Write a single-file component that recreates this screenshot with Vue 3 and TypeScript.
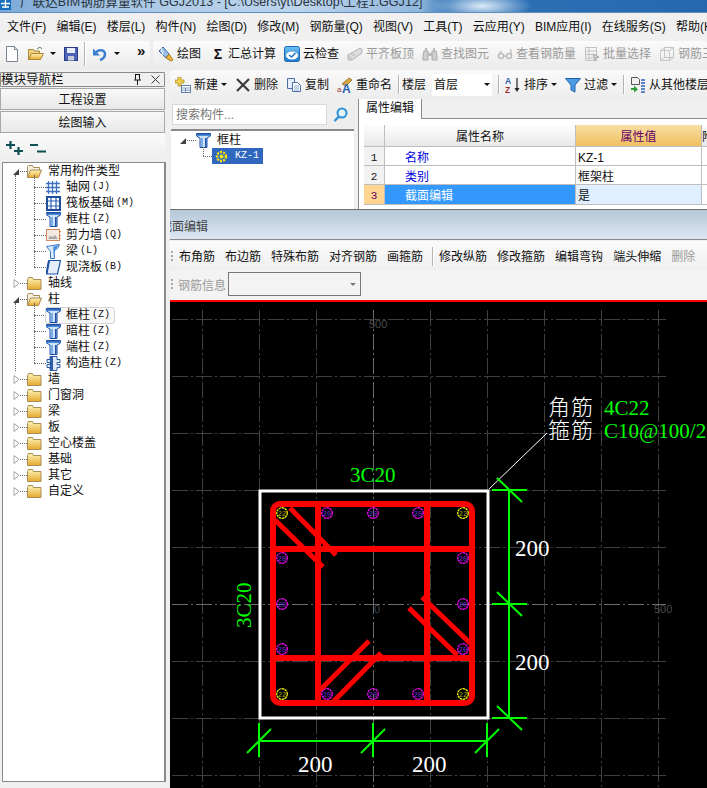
<script setup lang="ts">
interface ToolItem {
  icon?: string;
  glyph?: string;
  text: string;
  dim?: boolean;
  caret?: boolean;
  sep?: boolean;
}
interface TreeLeaf {
  icon: string;
  label: string;
  key: string;
  hover?: boolean;
}
interface TreeRoot {
  label: string;
  kids?: TreeLeaf[];
}

const menus = ['文件(F)', '编辑(E)', '楼层(L)', '构件(N)', '绘图(D)', '修改(M)', '钢筋量(Q)', '视图(V)', '工具(T)', '云应用(Y)', 'BIM应用(I)', '在线服务(S)', '帮助(H)'];

const mainTools: ToolItem[] = [
  { icon: 'i-brush', text: '绘图' },
  { glyph: 'Σ', text: '汇总计算' },
  { icon: 'i-cloud', text: '云检查' },
  { icon: 'i-level', text: '平齐板顶', dim: true },
  { icon: 'i-binoc', text: '查找图元', dim: true },
  { icon: 'i-glasses', text: '查看钢筋量', dim: true },
  { icon: 'i-batch', text: '批量选择', dim: true },
  { icon: 'i-cage', text: '钢筋三维', dim: true },
];

const partTools: ToolItem[] = [
  { icon: 'i-new', text: '新建', caret: true },
  { icon: 'i-x', text: '删除' },
  { icon: 'i-copy', text: '复制' },
  { icon: 'i-rename', text: '重命名' },
];

const tree: TreeRoot[] = [
  {
    label: '常用构件类型',
    kids: [
      { icon: 'i-grid', label: '轴网', key: '(J)' },
      { icon: 'i-raft', label: '筏板基础', key: '(M)' },
      { icon: 'i-col', label: '框柱', key: '(Z)' },
      { icon: 'i-wall', label: '剪力墙', key: '(Q)' },
      { icon: 'i-beam', label: '梁', key: '(L)' },
      { icon: 'i-slab', label: '现浇板', key: '(B)' },
    ],
  },
  { label: '轴线' },
  {
    label: '柱',
    kids: [
      { icon: 'i-col', label: '框柱', key: '(Z)', hover: true },
      { icon: 'i-col', label: '暗柱', key: '(Z)' },
      { icon: 'i-col', label: '端柱', key: '(Z)' },
      { icon: 'i-struct', label: '构造柱', key: '(Z)' },
    ],
  },
  { label: '墙' },
  { label: '门窗洞' },
  { label: '梁' },
  { label: '板' },
  { label: '空心楼盖' },
  { label: '基础' },
  { label: '其它' },
  { label: '自定义' },
];

const props = [
  { no: 1, name: '名称', value: 'KZ-1' },
  { no: 2, name: '类别', value: '框架柱' },
  { no: 3, name: '截面编辑', value: '是', active: true },
];

const rebarTools = ['布角筋', '布边筋', '特殊布筋', '对齐钢筋', '画箍筋'];
const rebarTools2 = ['修改纵筋', '修改箍筋', '编辑弯钩', '端头伸缩'];

// canvas data, in page coordinates (the svg viewBox starts at 170,302)
const gridX = [202.5, 259.5, 316.5, 373.5, 430.5, 487.5, 544.5, 601.5, 658.5];
const gridY = [319.5, 376.5, 433.5, 490.5, 547.5, 604.5, 661.5, 718.5, 775.5];
const barX = [282, 327, 373, 418, 463];
const barY = [513, 558, 604, 649, 694];

const bars = barY.flatMap((y, r) =>
  barX.flatMap((x, c) => {
    const edgeRow = r === 0 || r === 4;
    const edgeCol = c === 0 || c === 4;
    if (!edgeRow && !edgeCol) return [];
    return [{ x, y, corner: edgeRow && edgeCol }];
  }),
);

const diagonals = [
  [290, 508, 336, 555],
  [275, 520, 323, 567],
  [320, 690, 369, 641],
  [333, 702, 381, 653],
  [422, 597, 470, 643],
  [409, 608, 457, 655],
];

const dimSlashes = [
  [497, 478, 522, 502],
  [497, 592, 522, 616],
  [497, 706, 522, 730],
  [247, 753, 271, 729],
  [361, 753, 385, 729],
  [475, 753, 499, 729],
];
</script>

<template>
  <div class="app">
    <svg class="defs" width="0" height="0">
      <defs>
        <linearGradient id="g-folder" x1="0" y1="0" x2="0" y2="1">
          <stop offset="0" stop-color="#fff3b8" />
          <stop offset="1" stop-color="#e6a92c" />
        </linearGradient>
        <linearGradient id="g-cloud" x1="0" y1="0" x2="0" y2="1">
          <stop offset="0" stop-color="#6cc0f2" />
          <stop offset="1" stop-color="#1e78c8" />
        </linearGradient>
        <linearGradient id="g-col" x1="0" y1="0" x2="0" y2="1">
          <stop offset="0" stop-color="#1b4fa8" />
          <stop offset="1" stop-color="#5d9be0" />
        </linearGradient>
      </defs>
      <symbol id="i-open-tri" viewBox="0 0 7 9"><path d="M6 2v6H0z" fill="#444" /></symbol>
      <symbol id="i-closed-tri" viewBox="0 0 7 9"><path d="M1 .5l5 4-5 4z" fill="#fff" stroke="#a6a6a6" /></symbol>
      <symbol id="i-folder" viewBox="0 0 15 13">
        <path d="M.5 2.500l1-2h4l1 2h7.500v10H.5z" fill="url(#g-folder)" stroke="#a98b55" />
      </symbol>
      <symbol id="i-folder-open" viewBox="0 0 15 13">
        <path d="M.5 12.500v-11l1-1h4l1 2h6v3" fill="#f4f0e2" stroke="#a98b55" />
        <path d="M.5 12.500l3-7.500h11l-3 7.500z" fill="url(#g-folder)" stroke="#a98b55" />
      </symbol>
      <symbol id="i-grid" viewBox="0 0 15 15">
        <path d="M2.500 1v13M6.500 1v13M10.500 1v13M0 3.500h14M0 7.500h14M0 11.500h14" stroke="#3f6fc0" stroke-width="1.300" fill="none" />
      </symbol>
      <symbol id="i-raft" viewBox="0 0 15 15">
        <rect x="1" y="1" width="13" height="13" fill="#fff" stroke="#1e4e9c" stroke-width="2" />
        <path d="M5 2v11M10 2v11M2 5h11M2 10h11" stroke="#2a62b8" stroke-width="1.200" />
      </symbol>
      <symbol id="i-col" viewBox="0 0 15 15">
        <path d="M.5 .5h14v2.500l-3.500 2v9.500h-7v-9.500l-3.500-2z" fill="#cfe2f7" stroke="#1d4fa5" />
        <path d="M.5 .5h14v2.500h-14z" fill="url(#g-col)" />
        <path d="M5 5h2v9H5z" fill="#7ab0ea" />
        <path d="M9 5h1.500v9H9z" fill="#1d4fa5" />
      </symbol>
      <symbol id="i-wall" viewBox="0 0 15 15">
        <rect x=".5" y="1.500" width="13" height="11" fill="#f3e9e0" stroke="#d08a60" />
        <path d="M2 11l2-3 3 1 2-2 3 4z" fill="#a8a8a8" />
        <path d="M14 3v1M14 7v1M14 10v1" stroke="#e07020" stroke-width="1.500" />
      </symbol>
      <symbol id="i-beam" viewBox="0 0 15 15">
        <path d="M.5 2.500l13-2-2 4-3 2v8h-4v-7z" fill="#dceafa" stroke="#3a78c8" />
        <path d="M7 3l6-2.500-4 6v8H8z" fill="#4c8fdc" />
      </symbol>
      <symbol id="i-slab" viewBox="0 0 15 15">
        <path d="M3 .5h11.500l-3 13.500h-11z" fill="#e4eefb" stroke="#1d4fa5" stroke-width="1.200" />
        <path d="M.5 14L3 .5" stroke="#1d4fa5" stroke-width="2" />
      </symbol>
      <symbol id="i-struct" viewBox="0 0 15 15">
        <path d="M4 .5h7v3h3v3h-3v2h3v3h-3v3H4v-3H1v-3h3v-2H1v-3h3z" fill="#dfe9f7" stroke="#2c5ca8" />
        <path d="M4 1h3v13H4z" fill="#2c5ca8" />
      </symbol>
      <symbol id="i-doc" viewBox="0 0 16 16">
        <path d="M2.500 .5h8l3 3v12h-11z" fill="#fff" stroke="#77838f" />
        <path d="M10.500 .5v3h3" fill="#dfe6ee" stroke="#77838f" />
      </symbol>
      <symbol id="i-open" viewBox="0 0 16 16">
        <path d="M.5 13.500v-10h5l1 1.500h5v3" fill="#eed27e" stroke="#a9863a" />
        <path d="M.5 13.500l3-6h12l-3 6z" fill="url(#g-folder)" stroke="#a9863a" />
        <path d="M9 3c2-2 4-2 5 0" fill="none" stroke="#3a7a3a" />
      </symbol>
      <symbol id="i-save" viewBox="0 0 16 16">
        <rect x="1.500" y="1.500" width="13" height="13" fill="#4a62b8" stroke="#2a3c88" />
        <rect x="4" y="2" width="8" height="5" fill="#e8eef8" />
        <rect x="5" y="10" width="6" height="4.500" fill="#c8ccd6" />
      </symbol>
      <symbol id="i-undo" viewBox="0 0 16 16">
        <path d="M3 8c2-5 10-5 10 0 0 3-2 5-5 6" fill="none" stroke="#3a7fd0" stroke-width="2.600" />
        <path d="M1 2.500v7h7z" fill="#3a7fd0" />
      </symbol>
      <symbol id="i-brush" viewBox="0 0 16 16">
        <path d="M1 5l4-4 6 7-3 4z" fill="#9cc0ea" stroke="#38649e" />
        <path d="M8 12l3-4 4 6-2 1z" fill="#f0b43c" stroke="#a87820" />
        <path d="M3 2l2 7" stroke="#fff" />
      </symbol>
      <symbol id="i-cloud" viewBox="0 0 16 16">
        <rect x=".5" y=".5" width="15" height="15" rx="2" fill="url(#g-cloud)" stroke="#1a6ab4" />
        <ellipse cx="8" cy="9.500" rx="6" ry="4" fill="#fff" />
        <path d="M5 9l2.500 2 4-4" fill="none" stroke="#1e78c8" stroke-width="1.500" />
      </symbol>
      <symbol id="i-level" viewBox="0 0 16 16">
        <path d="M1 14V9l12-7 2 1v4L5 14z" fill="#dcdcdc" stroke="#b4b4b4" />
        <path d="M1 9l4 5M4 7l4 3" stroke="#b4b4b4" fill="none" />
      </symbol>
      <symbol id="i-binoc" viewBox="0 0 16 16">
        <path d="M2 5h4v9H1v-4zM10 5h4l1 5v4h-5z" fill="#cfcfcf" stroke="#aaa" />
        <path d="M3 2h2v3H3zM11 2h2v3h-2zM6 7h4v3H6z" fill="#bbb" />
      </symbol>
      <symbol id="i-glasses" viewBox="0 0 16 16">
        <circle cx="4" cy="10" r="2.500" fill="none" stroke="#bdbdbd" stroke-width="1.500" />
        <circle cx="12" cy="10" r="2.500" fill="none" stroke="#bdbdbd" stroke-width="1.500" />
        <path d="M6.500 10h3M1.500 9l3-4M14.500 9l-1-6" fill="none" stroke="#bdbdbd" stroke-width="1.300" />
      </symbol>
      <symbol id="i-batch" viewBox="0 0 16 16">
        <path d="M1.500 1.500h11v13h-11zM1.500 5h11M1.500 8.500h11M1.500 12h11M5 1.500v13" fill="none" stroke="#c4c4c4" />
        <path d="M9 8l6 3-3 1-1 3z" fill="#d4d4d4" stroke="#aaa" />
      </symbol>
      <symbol id="i-cage" viewBox="0 0 16 16">
        <path d="M1.500 4.500l4-3h9v10l-4 3h-9zM1.500 4.500h9v10M10.500 4.500l4-3M5.500 1.500v10h9M5.500 11.500l-4 3" fill="none" stroke="#c4c4c4" />
      </symbol>
      <symbol id="i-new" viewBox="0 0 16 16">
        <path d="M3 0h3v3h3v3H6v3H3V6H0V3h3z" fill="#f2d04e" stroke="#a88a20" stroke-width=".7" />
        <rect x="6.500" y="8.500" width="9" height="7" fill="#fff" stroke="#5f7fae" />
        <path d="M6.500 11h9M6.500 13.200h9M10.500 11v4.500" stroke="#5f7fae" stroke-width=".8" />
      </symbol>
      <symbol id="i-x" viewBox="0 0 16 16">
        <path d="M2 2l12 12M14 2L2 14" stroke="#3c3c3c" stroke-width="2.200" />
      </symbol>
      <symbol id="i-copy" viewBox="0 0 16 16">
        <path d="M1.500 1.500h7v10h-7z" fill="#e4eefb" stroke="#4a6ea8" />
        <path d="M6.500 5.500h5l3 3v6h-8z" fill="#fff" stroke="#4a6ea8" />
        <path d="M8 9h5M8 11h5M8 13h5" stroke="#6c8fc4" stroke-width=".8" />
      </symbol>
      <symbol id="i-rename" viewBox="0 0 16 16">
        <path d="M5 7l7-6 3 2-6 6z" fill="#d8a83c" stroke="#7a5a18" stroke-width=".7" />
        <text x="0" y="15" font-size="8" fill="#a03838" font-family="Liberation Sans">a</text>
        <text x="5" y="15.500" font-size="12" font-weight="700" fill="#2a62b8" font-family="Liberation Sans">A</text>
      </symbol>
      <symbol id="i-sort" viewBox="0 0 16 16">
        <text x="0" y="7" font-size="8.500" font-weight="700" fill="#3060b0" font-family="Liberation Sans">A</text>
        <text x="0" y="15.500" font-size="8.500" font-weight="700" fill="#a03030" font-family="Liberation Sans">Z</text>
        <path d="M12 1v12" stroke="#222" stroke-width="1.200" />
        <path d="M9.500 11h5L12 15z" fill="#222" />
      </symbol>
      <symbol id="i-filter" viewBox="0 0 16 16">
        <path d="M.5 1.500h15L10 8v7l-4-2V8z" fill="#4c9ae4" stroke="#1e62ac" />
      </symbol>
      <symbol id="i-floor" viewBox="0 0 16 16">
        <path d="M1.500 .5h6l2 2v5h-8z" fill="#f2f2f2" stroke="#555" />
        <path d="M1 11h3V8.500l4 4-4 3V13H1z" fill="#2f9a3a" />
        <path d="M11 3h4M11 6h4M11 9h4M11 12h4M11 15h4" stroke="#2a62b8" stroke-width="1.600" />
      </symbol>
      <symbol id="i-gear" viewBox="0 0 13 13">
        <circle cx="6.500" cy="6.500" r="4.500" fill="none" stroke="#ffe600" stroke-width="2.400" stroke-dasharray="2 1.200" />
        <circle cx="6.500" cy="6.500" r="2" fill="#ffe600" />
      </symbol>
    </svg>

    <header class="titlebar">
      <svg class="app-icon" width="11" height="10" viewBox="0 0 11 10">
        <rect width="11" height="10" fill="#1670c0" />
        <path d="M1 3.500h9M5.500 0v8M2 7h7" stroke="#fff" stroke-width="1.300" fill="none" />
      </svg>
      <span class="title-text">广联达BIM钢筋算量软件 GGJ2013 - [C:\Users\yt\Desktop\工程1.GGJ12]</span>
    </header>

    <nav class="menubar">
      <span v-for="m in menus" :key="m">{{ m }}</span>
    </nav>

    <div class="mainbar">
      <div class="band band-file">
        <svg class="ic"><use href="#i-doc" /></svg>
        <svg class="ic ic-open"><use href="#i-open" /></svg>
        <i class="caret"></i>
        <svg class="ic"><use href="#i-save" /></svg>
        <b class="sep"></b>
        <svg class="ic"><use href="#i-undo" /></svg>
        <i class="caret"></i>
        <span class="more">»</span>
      </div>
      <div class="band band-tools">
        <span v-for="t in mainTools" :key="t.text" class="tool" :class="{ dim: t.dim }">
          <b v-if="t.glyph" class="glyph">{{ t.glyph }}</b>
          <svg v-else class="ic"><use :href="'#' + t.icon" /></svg>
          {{ t.text }}
        </span>
      </div>
    </div>

    <div class="body">
      <aside class="nav">
        <div class="nav-head">
          <span>模块导航栏</span>
          <span class="nav-ctl">
            <svg width="9" height="11" viewBox="0 0 9 11"><path d="M2.500 .5v5M6.500 .5v5M1 6h7M4.500 6v5M2 .5h5" stroke="#111" fill="none" /></svg>
            <svg width="9" height="9" viewBox="0 0 9 9"><path d="M.5 .5l8 8M8.500 .5l-8 8" stroke="#333" fill="none" /></svg>
          </span>
        </div>
        <div class="nav-btn">工程设置</div>
        <div class="nav-btn">绘图输入</div>
        <div class="nav-tools">
          <svg width="17" height="14" viewBox="0 0 17 14"><path d="M0 4h9M4.500 0v8M8 10h9M12.500 6v8" stroke="#0d4f52" stroke-width="2.200" fill="none" /></svg>
          <svg width="16" height="10" viewBox="0 0 16 10"><path d="M0 2h8M7 8.500h9" stroke="#0d4f52" stroke-width="2.200" fill="none" /></svg>
        </div>
        <div class="tree">
          <div v-for="root in tree" :key="root.label">
            <div class="row root">
              <svg class="tri"><use :href="root.kids ? '#i-open-tri' : '#i-closed-tri'" /></svg>
              <i class="dots"></i>
              <svg class="fold"><use :href="root.kids ? '#i-folder-open' : '#i-folder'" /></svg>
              <span class="lbl">{{ root.label }}</span>
            </div>
            <div v-if="root.kids" class="kids">
              <div v-for="leaf in root.kids" :key="leaf.label" class="row leaf">
                <i class="dots long"></i>
                <span class="leaf-body" :class="{ hover: leaf.hover }">
                  <svg class="leaf-ic"><use :href="'#' + leaf.icon" /></svg>
                  <span class="lbl">{{ leaf.label }}</span>
                  <span class="hot">{{ leaf.key }}</span>
                </span>
              </div>
            </div>
          </div>
        </div>
      </aside>

      <main class="work">
        <div class="partbar">
          <span v-for="t in partTools" :key="t.text" class="tool">
            <svg class="ic"><use :href="'#' + t.icon" /></svg>
            {{ t.text }}<i v-if="t.caret" class="caret"></i>
          </span>
          <b class="sep"></b>
          <span class="floor-lbl">楼层</span>
          <span class="floor-box">首层<i class="caret"></i></span>
          <b class="sep"></b>
          <span class="tool"><svg class="ic"><use href="#i-sort" /></svg>排序<i class="caret"></i></span>
          <span class="tool"><svg class="ic"><use href="#i-filter" /></svg>过滤<i class="caret"></i></span>
          <b class="sep"></b>
          <span class="tool"><svg class="ic"><use href="#i-floor" /></svg>从其他楼层复制</span>
        </div>

        <div class="split">
          <section class="parts">
            <div class="search">
              <span class="search-box">搜索构件...</span>
              <svg width="15" height="15" viewBox="0 0 15 15"><circle cx="9" cy="6" r="4.500" fill="#e4f2fc" stroke="#2f8fd8" stroke-width="2" /><path d="M6 9.500L1.500 14" stroke="#2f8fd8" stroke-width="2.400" /></svg>
            </div>
            <div class="part-tree">
              <div class="part-root">
                <svg class="tri"><use href="#i-open-tri" /></svg>
                <i class="dots"></i>
                <svg class="leaf-ic"><use href="#i-col" /></svg>
                <span class="lbl">框柱</span>
              </div>
              <div class="part-leaf">
                <i class="dots long"></i>
                <span class="picked">
                  <svg width="13" height="13"><use href="#i-gear" /></svg>
                  <span class="hot">KZ-1</span>
                </span>
              </div>
            </div>
          </section>

          <section class="prop">
            <div class="tabs"><span class="tab">属性编辑</span></div>
            <div class="table">
              <div class="tr th">
                <span class="c-no"></span>
                <span class="c-name">属性名称</span>
                <span class="c-val">属性值</span>
                <span class="c-end">附</span>
              </div>
              <div v-for="p in props" :key="p.no" class="tr" :class="{ active: p.active }">
                <span class="c-no">{{ p.no }}</span>
                <span class="c-name">{{ p.name }}</span>
                <span class="c-val">{{ p.value }}</span>
                <span class="c-end"></span>
              </div>
            </div>
          </section>
        </div>

        <div class="dlg-title"><span>截面编辑</span></div>
        <div class="rebar-bar">
          <i class="grip"></i>
          <span v-for="t in rebarTools" :key="t">{{ t }}</span>
          <b class="sep"></b>
          <span v-for="t in rebarTools2" :key="t">{{ t }}</span>
          <span class="dim">删除</span>
        </div>
        <div class="rebar-info">
          <i class="grip"></i>
          <span class="dim">钢筋信息</span>
          <span class="info-box"><i class="caret gray"></i></span>
        </div>

        <svg class="canvas" viewBox="170 302 537 486" width="537" height="486">
          <g class="grid">
            <line v-for="x in gridX" :key="'v' + x" :x1="x" y1="310" :x2="x" y2="788" :class="{ axis: x === 373.5 }" />
            <line v-for="y in gridY" :key="'h' + y" x1="172" :y1="y" x2="666" :y2="y" :class="{ axis: y === 604.5 }" />
          </g>
          <text x="369" y="328" class="scale">500</text>
          <text x="654" y="613" class="scale">500</text>
          <text x="374" y="613" class="scale origin">0</text>

          <rect x="260" y="491" width="228" height="227" class="outline" />
          <line x1="489" y1="489" x2="547" y2="433" class="leader" />

          <g class="steel">
            <rect x="273" y="504" width="199" height="199" rx="7" />
            <line x1="273" y1="549" x2="472" y2="549" />
            <line x1="273" y1="658" x2="472" y2="658" />
            <line x1="318" y1="504" x2="318" y2="703" />
            <line x1="427" y1="504" x2="427" y2="703" />
            <line v-for="(d, i) in diagonals" :key="i" :x1="d[0]" :y1="d[1]" :x2="d[2]" :y2="d[3]" class="diag" />
          </g>

          <g v-for="b in bars" :key="b.x + '-' + b.y" class="bar" :class="{ corner: b.corner }">
            <circle :cx="b.x" :cy="b.y" r="5.300" />
            <text :x="b.x" :y="b.y + 2.500">{{ b.corner ? '22' : '20' }}</text>
          </g>

          <g class="dim-lines">
            <line x1="509" y1="490" x2="509" y2="718" />
            <line x1="492" y1="490" x2="527" y2="490" />
            <line x1="492" y1="604" x2="527" y2="604" />
            <line x1="492" y1="718" x2="527" y2="718" />
            <line x1="259" y1="741" x2="487" y2="741" />
            <line x1="259" y1="723" x2="259" y2="757" />
            <line x1="373" y1="723" x2="373" y2="757" />
            <line x1="487" y1="723" x2="487" y2="757" />
            <line v-for="(s, i) in dimSlashes" :key="i" :x1="s[0]" :y1="s[1]" :x2="s[2]" :y2="s[3]" />
          </g>

          <text x="515" y="556" class="size">200</text>
          <text x="515" y="670" class="size">200</text>
          <text x="298" y="772" class="size">200</text>
          <text x="412" y="772" class="size">200</text>

          <text x="350" y="482" class="spec">3C20</text>
          <text transform="translate(251 628) rotate(-90)" class="spec">3C20</text>

          <text x="548" y="415" class="note">角筋</text>
          <text x="548" y="438" class="note">箍筋</text>
          <text x="604" y="415" class="spec">4C22</text>
          <text x="604" y="438" class="spec">C10@100/200</text>
        </svg>
      </main>
    </div>
  </div>
</template>

<style>
html,
body {
  margin: 0;
  background: #f0f0f0;
}
</style>

<style scoped>
.app {
  width: 707px;
  height: 788px;
  overflow: hidden;
  display: flex;
  flex-direction: column;
  background: #f0f0f0;
  color: #111;
  font: 12px/16px "Liberation Sans", "Noto Sans CJK SC", sans-serif;
}
.defs {
  position: absolute;
}
.ic {
  width: 16px;
  height: 16px;
  flex: none;
}
.caret {
  display: inline-block;
  flex: none;
  width: 0;
  height: 0;
  border: 3px solid transparent;
  border-top: 3px solid #111;
  border-bottom: 0;
}
.caret.gray {
  border-top-color: #777;
}
.sep {
  flex: none;
  width: 1px;
  height: 19px;
  background: #b4b4b4;
  box-shadow: 1px 0 #fff;
}
.dim {
  color: #9a9a9a;
}

.titlebar {
  flex: none;
  height: 13px;
  display: flex;
  align-items: flex-start;
  overflow: hidden;
  background:
    radial-gradient(ellipse 50px 14px at 482px 6px, #dcebf8, transparent),
    linear-gradient(90deg, #7aa8d6 0, #a9c8e6 120px, #bcd4ec 300px, #8fb6dc 420px, #2f72b6 450px, #2668ae 707px);
  border-bottom: 1px solid #5d8cbe;
  box-sizing: border-box;
}
.app-icon {
  flex: none;
}
.title-text {
  margin: -4px 0 0 9px;
  white-space: nowrap;
  font-size: 12.600px;
  line-height: 13px;
  color: #2a3440;
}

.menubar {
  flex: none;
  height: 28px;
  display: flex;
  align-items: center;
  gap: 10.200px;
  padding-left: 7px;
  white-space: nowrap;
  background: #f0f0f0;
}

.mainbar {
  flex: none;
  height: 29px;
  display: flex;
  gap: 3px;
  padding-bottom: 4px;
  box-sizing: border-box;
  background: #ececec;
}
.band {
  display: flex;
  align-items: center;
  height: 25px;
  background: linear-gradient(#fbfbfb, #ececec);
  border-radius: 3px;
}
.band-file {
  flex: none;
  width: 150px;
  box-sizing: border-box;
  padding-left: 4px;
}
.band-file .ic-open {
  margin-left: 8px;
}
.band-file .caret {
  margin: 0 7px 0 6px;
}
.band-file .sep {
  margin: 0 7px 0 5px;
  height: 24px;
}
.band-file .caret:last-of-type {
  margin-right: 0;
}
.more {
  margin: -6px 0 0 17px;
  font-size: 15px;
  font-weight: 700;
}
.band-tools {
  flex: 1;
  gap: 8px;
  padding-left: 5px;
  white-space: nowrap;
  overflow: hidden;
}
.tool {
  display: inline-flex;
  align-items: center;
  gap: 3px;
  flex: none;
  white-space: nowrap;
}
.glyph {
  width: 14px;
  text-align: center;
  font-size: 14px;
  margin-left: 2px;
}

.body {
  flex: 1;
  min-height: 0;
  display: flex;
  gap: 5px;
}

.nav {
  flex: none;
  width: 165px;
  display: flex;
  flex-direction: column;
  padding-bottom: 6px;
  box-sizing: border-box;
}
.nav-head {
  flex: none;
  display: flex;
  justify-content: space-between;
  align-items: center;
  height: 13px;
  margin-top: 2px;
  border: 1px solid #8a8a8a;
  border-radius: 1px;
  font-size: 12.500px;
  white-space: nowrap;
}
.nav-ctl {
  display: flex;
  align-items: center;
  gap: 9px;
  padding-right: 4px;
}
.nav-btn {
  flex: none;
  height: 20px;
  line-height: 22px;
  margin-top: 1px;
  text-align: center;
  border: 1px solid #a8a8a8;
  background: linear-gradient(#f8f8f8, #e8e8e8);
  box-sizing: content-box;
}
.nav-tools {
  flex: none;
  height: 29px;
  display: flex;
  align-items: center;
  gap: 7px;
  padding-left: 6px;
  background: linear-gradient(#fafafa, #eeeeee);
}
.tree {
  flex: 1;
  margin: 0 0 0 2px;
  width: 161px;
  border: 1px solid #8a8a8a;
  border-right: 2px solid #8a8a8a;
  background: #fff;
  box-sizing: content-box;
}
.row {
  display: flex;
  align-items: center;
  height: 16px;
  white-space: nowrap;
}
.root {
  padding-left: 10px;
}
.leaf {
  padding-left: 31px;
}
.tri {
  flex: none;
  width: 7px;
  height: 9px;
}
.dots {
  flex: none;
  width: 7px;
  border-top: 1px dotted #666;
}
.dots.long {
  width: 12px;
}
.fold {
  flex: none;
  width: 15px;
  height: 13px;
  margin-right: 6px;
}
.leaf-ic {
  flex: none;
  width: 15px;
  height: 15px;
}
.leaf-body {
  display: flex;
  align-items: center;
  gap: 4px;
  height: 15px;
  padding-right: 4px;
  border: 1px solid transparent;
  border-radius: 3px;
  margin: 0 0 0 -1px;
}
.leaf-body .lbl {
  margin-left: 1px;
}
.hot {
  font: 10px/12px "Liberation Mono", monospace;
  margin-left: -2px;
}
.leaf-body.hover {
  background: #f8f8f8;
  border-color: #d4d4d4;
}
.kids {
  position: relative;
}
.kids::before,
.kids::after {
  content: "";
  position: absolute;
  top: -4px;
  bottom: 8px;
  border-left: 1px dotted #666;
}
.kids::before {
  left: 31px;
}
.kids::after {
  left: 12px;
  bottom: 0;
}

.work {
  flex: 1;
  min-width: 0;
  display: flex;
  flex-direction: column;
}
.partbar {
  flex: none;
  height: 29px;
  display: flex;
  align-items: center;
  gap: 6px;
  padding-left: 5px;
  white-space: nowrap;
  overflow: hidden;
  background: linear-gradient(#fafafa, #ececec);
  border-radius: 3px 0 0 3px;
}
.partbar .tool + .tool {
  margin-left: 2px;
}
.floor-lbl {
  margin-left: -3px;
}
.floor-box {
  flex: none;
  display: flex;
  align-items: center;
  justify-content: space-between;
  width: 60px;
  height: 22px;
  box-sizing: border-box;
  padding: 0 2px;
  background: #fff;
}
.split {
  flex: none;
  height: 110px;
  display: flex;
}
.parts {
  flex: none;
  width: 188px;
  box-sizing: border-box;
  display: flex;
  flex-direction: column;
  padding-left: 1px;
}
.search {
  flex: none;
  display: flex;
  align-items: center;
  gap: 6px;
  height: 30px;
  background: #eeeeee;
}
.search-box {
  flex: none;
  width: 155px;
  height: 21px;
  line-height: 21px;
  padding-left: 3px;
  box-sizing: border-box;
  margin-left: 1px;
  background: #fff;
  border: 1px solid #d8d8d8;
  color: #777;
}
.part-tree {
  flex: 1;
  width: 183px;
  box-sizing: border-box;
  background: #fff;
  border-top: 2px solid #8a8a8a;
  padding: 1px 0 0 9px;
  position: relative;
}
.part-root {
  display: flex;
  align-items: center;
  height: 16px;
}
.part-root .leaf-ic {
  margin-right: 6px;
}
.part-root .dots {
  width: 9px;
}
.part-leaf {
  display: flex;
  align-items: center;
  height: 16px;
  padding-left: 23px;
}
.part-leaf .dots.long {
  width: 9px;
}
.part-leaf::before {
  content: "";
  position: absolute;
  left: 32px;
  top: 16px;
  height: 9px;
  border-left: 1px dotted #666;
}
.picked {
  display: flex;
  align-items: center;
  gap: 9px;
  width: 51px;
  height: 16px;
  padding-left: 3px;
  box-sizing: border-box;
  background: #3068c0;
  color: #fff;
}
.prop {
  flex: 1;
  min-width: 0;
  display: flex;
  flex-direction: column;
  background: #fff;
  border-left: 1px solid #8a8a8a;
}
.tabs {
  flex: none;
  height: 20px;
  box-sizing: border-box;
  border-bottom: 1px solid #8a8a8a;
  background: #f0f0f0;
}
.tab {
  display: block;
  width: 63px;
  height: 20px;
  line-height: 19px;
  box-sizing: border-box;
  padding-left: 7px;
  background: #fff;
  border-right: 1px solid #8a8a8a;
}
.table {
  flex: 1;
  padding: 6px 0 0 5px;
  overflow: hidden;
}
.tr {
  display: flex;
  height: 19.200px;
  box-sizing: border-box;
  border-bottom: 1px solid #bebebe;
  white-space: nowrap;
}
.tr > span {
  flex: none;
  height: 100%;
  box-sizing: border-box;
  border-right: 1px solid #bebebe;
  line-height: 22px;
}
.c-no {
  width: 21px;
  text-align: center;
  font-family: "Liberation Mono", monospace;
  font-size: 11px;
  background: #f2f2f2;
}
.c-name {
  width: 191px;
  padding-left: 20px;
  color: #0000e0;
}
.c-val {
  width: 126px;
  padding-left: 2px;
}
.c-end {
  width: 12px;
}
.tr.th {
  height: 22px;
}
.tr.th > span {
  line-height: 25px;
  background: linear-gradient(#fdfdfd, #e8e8e8);
  color: #111;
  text-align: center;
  padding: 0;
}
.tr.th .c-val {
  background: linear-gradient(#f8dea6, #f0c05e);
  color: #660066;
}
.tr.th .c-end {
  text-align: left;
}
.tr.active .c-no {
  background: #ffd591;
  color: #660066;
}
.tr.active .c-name {
  background: #3399ff;
  color: #fff;
}
.tr.active .c-val {
  background: #dfefff;
}

.dlg-title {
  flex: none;
  height: 31px;
  box-sizing: border-box;
  overflow: hidden;
  border-top: 1px solid #707070;
  border-bottom: 1px solid #8a8a8a;
  background: linear-gradient(#b6c7d8, #dce7f2);
  line-height: 35px;
  color: #444;
  white-space: nowrap;
}
.dlg-title span {
  display: block;
  margin-left: -10px;
}
.rebar-bar,
.rebar-info {
  flex: none;
  display: flex;
  align-items: center;
  height: 30px;
  white-space: nowrap;
  background: linear-gradient(#fbfbfb, #efefef);
}
.rebar-bar {
  gap: 10px;
  padding: 2px 0 0 1px;
  margin-top: 1px;
  height: 29px;
  box-sizing: border-box;
}
.rebar-bar .grip {
  margin-right: -4px;
}
.rebar-bar .sep {
  margin: 0 -4px 0 -1px;
}
.rebar-info {
  gap: 2px;
  padding-left: 1px;
  background: #f3f3f3;
}
.rebar-info .dim {
  margin-top: 2px;
}
.grip {
  flex: none;
  width: 2px;
  height: 12px;
  background: repeating-linear-gradient(#a8a8a8 0 2px, transparent 2px 4px);
}
.rebar-info .grip {
  margin-right: 3px;
}
.info-box {
  flex: none;
  width: 133px;
  height: 24px;
  margin-top: -2px;
  box-sizing: border-box;
  display: flex;
  align-items: center;
  justify-content: flex-end;
  padding-right: 4px;
  border: 1px solid #777;
  background: #f4f4f4;
}

.canvas {
  display: block;
  flex: none;
  background: #000;
  border-top: 2px solid #f00;
  box-sizing: content-box;
}
.grid line {
  stroke: #404040;
  stroke-width: 1;
  stroke-dasharray: 16 3 2 3;
  shape-rendering: crispEdges;
}
.grid line.axis {
  stroke: #6a6a6a;
}
.scale {
  fill: #4a4a4a;
  font: 11px "Liberation Sans", sans-serif;
}
.scale.origin {
  fill: #35485a;
}
.outline {
  fill: none;
  stroke: #fff;
  stroke-width: 3;
}
.leader {
  stroke: #fff;
  stroke-width: 1;
}
.steel rect,
.steel line {
  fill: none;
  stroke: #f00;
  stroke-width: 6;
}
.steel line.diag {
  stroke-width: 5;
}
.bar circle {
  fill: none;
  stroke: #ff00ff;
  stroke-width: 1.200;
  stroke-dasharray: 2.500 .5;
}
.bar text {
  fill: #7030e0;
  text-anchor: middle;
  font: 7px "Liberation Mono", monospace;
}
.bar.corner circle {
  stroke: #ffff00;
}
.bar.corner text {
  fill: #b0b000;
}
.dim-lines line {
  stroke: #00ff00;
  stroke-width: 2;
}
.size {
  fill: #fff;
  font: 23px "Liberation Serif", serif;
}
.spec {
  fill: #00ff00;
  font: 21px "Liberation Serif", serif;
}
.note {
  fill: #fff;
  font: 22px "Noto Sans CJK SC", sans-serif;
  font-weight: 300;
  letter-spacing: 1px;
}
</style>
